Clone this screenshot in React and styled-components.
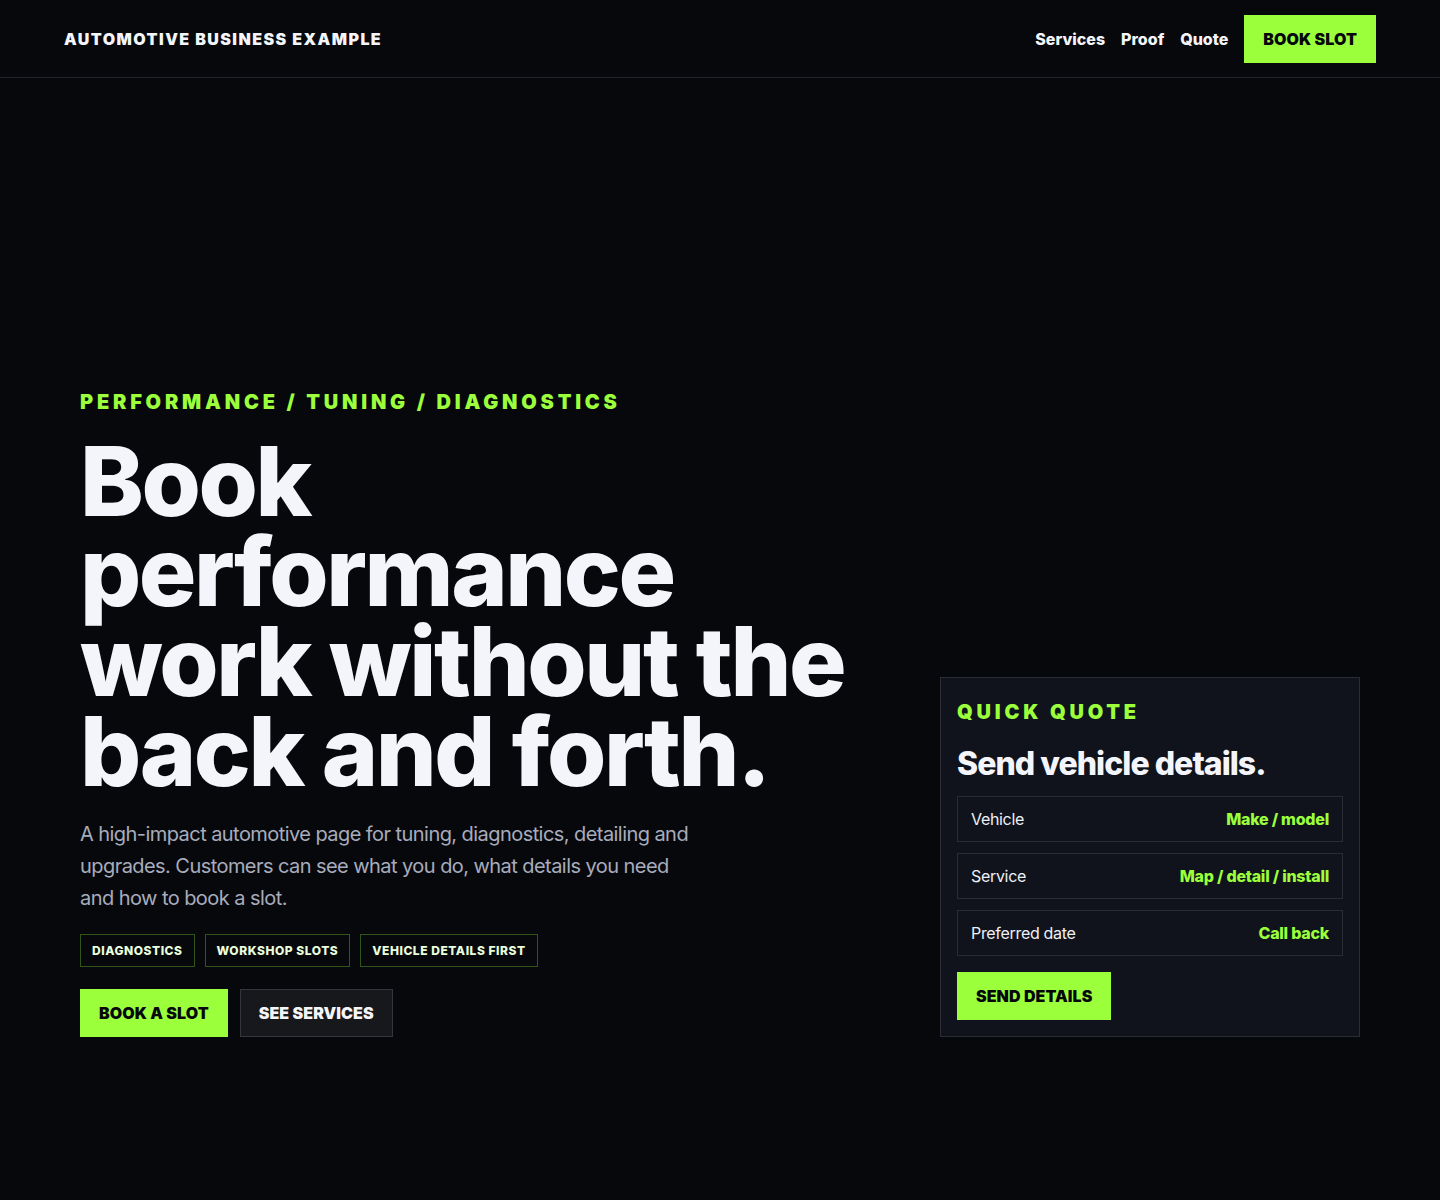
import React from "react";
import styled, { createGlobalStyle } from "styled-components";

const Global = createGlobalStyle`
  html, body { margin: 0; padding: 0; background: #07080c; }
  body { font-family: Inter, "Noto Sans", "Liberation Sans", sans-serif; color: #f4f5fa; }
  * { box-sizing: border-box; }
`;

const green = "#9bff3c";

const Page = styled.div`
  min-height: 1200px;
  background: #07080c;
  display: flex;
  flex-direction: column;
`;

const Nav = styled.header`
  height: 78px;
  padding: 0 64px;
  display: flex;
  align-items: center;
  justify-content: space-between;
  border-bottom: 1px solid #22242b;
`;

const Logo = styled.div`
  font-size: 16px;
  font-weight: 900;
  letter-spacing: 0.09em;
  color: #f4f5fa;
`;

const NavLinks = styled.nav`
  display: flex;
  align-items: center;
  gap: 16px;
`;

const NavLink = styled.a`
  font-size: 16px;
  font-weight: 800;
  color: #f4f5fa;
  text-decoration: none;
  letter-spacing: 0;
`;

const Button = styled.a`
  display: inline-flex;
  align-items: center;
  justify-content: center;
  height: 48px;
  padding: 0 18px;
  font-size: 16px;
  font-weight: 900;
  letter-spacing: 0.005em;
  text-decoration: none;
  background: ${(p) => (p.$ghost ? "#17181c" : green)};
  color: ${(p) => (p.$ghost ? "#f4f5fa" : "#07080c")};
  border: 1px solid ${(p) => (p.$ghost ? "#34363d" : green)};
`;

const Hero = styled.main`
  flex: 1;
  display: grid;
  grid-template-columns: 1fr 420px;
  gap: 80px;
  align-items: end;
  padding: 0 80px 163px;
`;

const Left = styled.div`
  display: flex;
  flex-direction: column;
`;

const Eyebrow = styled.div`
  margin-top: ${(p) => p.$mt || 0}px;
  font-size: 20px;
  font-weight: 900;
  letter-spacing: 0.19em;
  color: ${green};
  text-transform: uppercase;
`;

const Headline = styled.h1`
  margin: 22px 0 0;
  font-size: 96px;
  line-height: 90px;
  font-weight: 800;
  letter-spacing: -0.025em;
  color: #f4f5fa;
`;

const Lead = styled.p`
  margin: 22px 0 0;
  max-width: 620px;
  font-size: 20px;
  line-height: 32px;
  color: #a8acbc;
  letter-spacing: -0.028em;
`;

const Tags = styled.div`
  display: flex;
  gap: 10px;
  margin-top: 20px;
`;

const Tag = styled.span`
  height: 33px;
  padding: 0 11px;
  display: inline-flex;
  align-items: center;
  border: 1px solid #2f5518;
  font-size: 12px;
  font-weight: 800;
  letter-spacing: 0.045em;
  color: #eaffdc;
`;

const Actions = styled.div`
  display: flex;
  gap: 12px;
  margin-top: 22px;
`;

const Card = styled.aside`
  background: #10131b;
  border: 1px solid #2a2d36;
  padding: 16px;
  display: flex;
  flex-direction: column;
`;

const CardTitle = styled.h2`
  margin: 20px 0 13px;
  font-size: 32px;
  font-weight: 800;
  letter-spacing: -0.03em;
  color: #f4f5fa;
`;

const Field = styled.div`
  height: 46px;
  padding: 0 13px;
  display: flex;
  align-items: center;
  justify-content: space-between;
  border: 1px solid #292c35;
  margin-bottom: 11px;
  font-size: 16px;
`;

const FieldLabel = styled.span`
  color: #eef0f6;
  letter-spacing: -0.02em;
`;

const FieldValue = styled.span`
  color: ${green};
  font-weight: 800;
  letter-spacing: -0.015em;
`;

const CardActions = styled.div`
  display: flex;
  margin-top: 5px;
`;

const fields = [
  ["Vehicle", "Make / model"],
  ["Service", "Map / detail / install"],
  ["Preferred date", "Call back"],
];

export default function App() {
  return (
    <Page>
      <Global />
      <Nav>
        <Logo>AUTOMOTIVE BUSINESS EXAMPLE</Logo>
        <NavLinks>
          <NavLink href="#services">Services</NavLink>
          <NavLink href="#proof">Proof</NavLink>
          <NavLink href="#quote">Quote</NavLink>
          <Button href="#book">BOOK SLOT</Button>
        </NavLinks>
      </Nav>
      <Hero>
        <Left>
          <Eyebrow>Performance / Tuning / Diagnostics</Eyebrow>
          <Headline>
            Book
            <br />
            performance
            <br />
            work without the
            <br />
            back and forth.
          </Headline>
          <Lead>
            A high-impact automotive page for tuning, diagnostics, detailing and
            upgrades. Customers can see what you do, what details you need and
            how to book a slot.
          </Lead>
          <Tags>
            <Tag>DIAGNOSTICS</Tag>
            <Tag>WORKSHOP SLOTS</Tag>
            <Tag>VEHICLE DETAILS FIRST</Tag>
          </Tags>
          <Actions>
            <Button href="#book">BOOK A SLOT</Button>
            <Button href="#services" $ghost>SEE SERVICES</Button>
          </Actions>
        </Left>
        <Card>
          <Eyebrow $mt={6}>Quick Quote</Eyebrow>
          <CardTitle>Send vehicle details.</CardTitle>
          {fields.map(([l, v]) => (
            <Field key={l}>
              <FieldLabel>{l}</FieldLabel>
              <FieldValue>{v}</FieldValue>
            </Field>
          ))}
          <CardActions>
            <Button href="#send">SEND DETAILS</Button>
          </CardActions>
        </Card>
      </Hero>
    </Page>
  );
}
